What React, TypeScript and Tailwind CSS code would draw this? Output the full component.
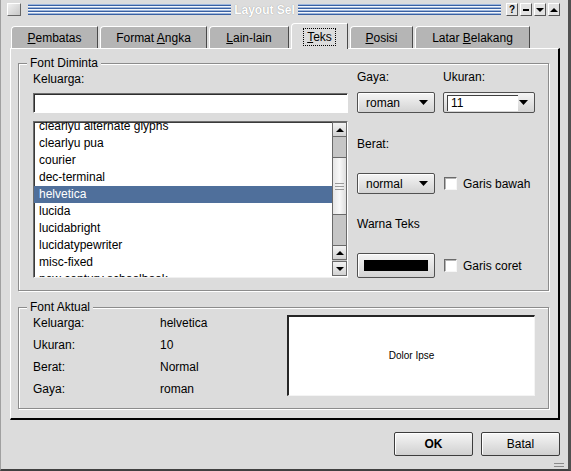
import React from 'react';

const families = [
  'clearlyu alternate glyphs',
  'clearlyu pua',
  'courier',
  'dec-terminal',
  'helvetica',
  'lucida',
  'lucidabright',
  'lucidatypewriter',
  'misc-fixed',
  'new century schoolbook',
];

const actual = [
  ['Keluarga:', 'helvetica'],
  ['Ukuran:', '10'],
  ['Berat:', 'Normal'],
  ['Gaya:', 'roman'],
];

function Arrow({ up = false, small = false, className = '' }: { up?: boolean; small?: boolean; className?: string }) {
  const w = small ? 8 : 9;
  const h = small ? 4 : 5;
  return (
    <svg width={w} height={h} viewBox={`0 0 ${w} ${h}`} className={className}>
      <polygon points={up ? `0,${h} ${w},${h} ${w / 2},0` : `0,0 ${w},0 ${w / 2},${h}`} fill="#000" />
    </svg>
  );
}

function Stripes() {
  return (
    <div className="flex h-[11px] flex-1 flex-col justify-between bg-[#f4f6fa]">
      {[0, 1, 2, 3].map((i) => (
        <div key={i} className="h-[2px] border-t border-[#9db6dc] bg-[#3a61a2]" />
      ))}
    </div>
  );
}

function TitleBtn({ children }: { children: React.ReactNode }) {
  return (
    <div className="flex h-[13px] w-[12px] items-center justify-center border border-t-white border-l-white border-r-[#555] border-b-[#555] bg-[#e2e2e2] text-[10px] font-bold leading-none">
      {children}
    </div>
  );
}

function Tab({ children, w }: { children: React.ReactNode; w: string }) {
  return (
    <div className={`flex h-[22px] items-center justify-center rounded-tl-[4px] border-t border-l border-t-white border-l-white border-r border-r-[#4a4a4a] bg-[#b5b5b5] ${w}`}>
      {children}
    </div>
  );
}

function Combo({ label, className = '' }: { label: string; className?: string }) {
  return (
    <div className={`flex h-[21px] items-center justify-between rounded-[2px] border border-[#515151] bg-linear-to-b from-[#f5f5f5] to-[#d3d3d3] pl-[8px] pr-[6px] shadow-[inset_1px_1px_0_#fff] ${className}`}>
      <span>{label}</span>
      <Arrow />
    </div>
  );
}

function Check() {
  return (
    <div className="h-[13px] w-[13px] shrink-0 border border-t-[#6a6a6a] border-l-[#6a6a6a] border-r-[#f6f6f6] border-b-[#f6f6f6] bg-white shadow-[inset_1px_1px_0_#b4b4b4]" />
  );
}

function ScrollBtn({ up = false }: { up?: boolean }) {
  return (
    <div className="flex h-[15px] shrink-0 items-center justify-center border border-[#6a6a6a] bg-linear-to-b from-[#f3f3f3] to-[#d2d2d2]">
      <Arrow up={up} small />
    </div>
  );
}

function Scrollbar() {
  return (
    <div className="flex w-[15px] flex-col">
      <ScrollBtn up />
      <div className="h-[20px] border-x border-[#6a6a6a] bg-[#c6c6c6]" />
      <div className="flex h-[58px] flex-col items-center justify-center gap-[2px] border border-[#6a6a6a] bg-linear-to-r from-[#e6e6e6] via-[#f8f8f8] to-[#dedede]">
        <div className="h-[1px] w-[9px] bg-[#9a9a9a]" />
        <div className="h-[1px] w-[9px] bg-[#9a9a9a]" />
        <div className="h-[1px] w-[9px] bg-[#9a9a9a]" />
      </div>
      <div className="h-[30px] border-x border-[#6a6a6a] bg-[#c6c6c6]" />
      <ScrollBtn up />
      <div className="h-[1px] bg-[#c6c6c6]" />
      <ScrollBtn />
    </div>
  );
}

function Group({ title, className, children }: { title: string; className: string; children: React.ReactNode }) {
  return (
    <div className={`relative border border-[#8c8c8c] shadow-[1px_1px_0_#fff,inset_1px_1px_0_#fff] ${className}`}>
      <span className="absolute -top-[8px] left-[8px] bg-[#dcdcdc] px-[3px] leading-[14px]">{title}</span>
      {children}
    </div>
  );
}

function PushButton({ children, bold = false }: { children: React.ReactNode; bold?: boolean }) {
  return (
    <div className={`flex h-[24px] w-[79px] items-center justify-center rounded-[2px] border border-[#3c3c3c] bg-linear-to-b from-[#f6f6f6] to-[#d0d0d0] shadow-[inset_1px_1px_0_#fff] ${bold ? 'font-bold' : ''}`}>
      {children}
    </div>
  );
}

export default function App() {
  return (
    <div className="relative flex h-[471px] w-[571px] flex-col overflow-hidden border-l border-r-[3px] border-b-2 border-l-[#a0a0a0] border-r-[#505050] border-b-[#404040] bg-[#dcdcdc] font-['Liberation_Sans',Arial,sans-serif] text-[12px] leading-[14px] text-black">
      {/* title bar */}
      <div className="flex h-[19px] items-center pl-[6px] pr-[8px]">
        <div className="h-[13px] w-[14px] border border-t-white border-l-white border-r-[#666] border-b-[#666] bg-linear-to-br from-[#f0f0f0] to-[#c8c8c8]" />
        <div className="ml-[7px] flex flex-1 items-center">
          <Stripes />
          <span className="px-[3px] font-bold text-white [text-shadow:0_0_1px_#8a8a8a]">Layout Sel</span>
          <Stripes />
        </div>
        <div className="ml-[5px] flex gap-[2px]">
          <TitleBtn>?</TitleBtn>
          <TitleBtn>
            <div className="h-[2px] w-[6px] bg-black" />
          </TitleBtn>
          <TitleBtn>
            <Arrow small />
          </TitleBtn>
          <TitleBtn>
            <Arrow small up />
          </TitleBtn>
        </div>
      </div>

      {/* tabs */}
      <div className="mt-[4px] flex h-[25px] items-end gap-[2px] pl-[10px]">
        <Tab w="w-[87px]">
          <span><span className="underline">P</span>embatas</span>
        </Tab>
        <Tab w="w-[107px]">
          <span>Format <span className="underline">A</span>ngka</span>
        </Tab>
        <Tab w="w-[80px]">
          <span><span className="underline">L</span>ain-lain</span>
        </Tab>
        <div className="relative z-10 -mb-px flex h-[26px] w-[57px] items-center justify-center rounded-tl-[4px] border-t border-l border-t-white border-l-white border-r border-r-[#4a4a4a] bg-[#dcdcdc]">
          <span className="border border-dotted border-black px-[3px] py-[1px]">
            <span className="underline">T</span>eks
          </span>
        </div>
        <Tab w="w-[63px]">
          <span><span className="underline">P</span>osisi</span>
        </Tab>
        <Tab w="w-[115px]">
          <span>Latar <span className="underline">B</span>elakang</span>
        </Tab>
      </div>

      {/* panel */}
      <div className="ml-[9px] flex h-[372px] w-[550px] flex-col border-t border-l border-r-2 border-b-2 border-t-white border-l-white border-r-black border-b-black pl-[7px]">
        <Group title="Font Diminta" className="mt-[14px] h-[228px] w-[531px]">
          <div className="flex pl-[14px]">
            <div className="flex w-[315px] flex-col pt-[8px]">
              <span>Keluarga:</span>
              <div className="mt-[7px] h-[20px] border border-t-[#6e6e6e] border-l-[#6e6e6e] border-r-white border-b-white bg-white shadow-[inset_1px_1px_0_#2e2e2e]" />
              <div className="mt-[8px] flex h-[157px] border border-t-[#6e6e6e] border-l-[#6e6e6e] border-r-white border-b-[#f0f0f0] bg-white shadow-[inset_1px_1px_0_#3a3a3a]">
                <div className="flex-1 overflow-hidden pt-[1px]">
                  <div className="-mt-[5px]">
                    {families.map((f) => (
                      <div
                        key={f}
                        className={`h-[17px] pl-[5px] leading-[17px] ${f === 'helvetica' ? 'bg-[#4f6f9b] text-white' : ''}`}
                      >
                        {f}
                      </div>
                    ))}
                  </div>
                </div>
                <Scrollbar />
              </div>
            </div>

            <div className="ml-[9px] flex flex-col pt-[6px]">
              <div className="flex gap-[8px]">
                <span className="w-[78px]">Gaya:</span>
                <span>Ukuran:</span>
              </div>
              <div className="mt-[8px] flex gap-[8px]">
                <Combo label="roman" className="w-[78px]" />
                <div className="flex h-[21px] w-[92px] items-center rounded-[2px] border border-[#515151] bg-linear-to-b from-[#f5f5f5] to-[#d3d3d3] pl-[3px] pr-[6px]">
                  <div className="flex h-[16px] w-[71px] items-center border-t border-l border-t-[#404040] border-l-[#404040] bg-white pl-[3px]">11</div>
                  <Arrow className="ml-auto" />
                </div>
              </div>
              <span className="mt-[24px]">Berat:</span>
              <div className="mt-[22px] flex items-center">
                <Combo label="normal" className="w-[78px]" />
                <div className="ml-[9px]"><Check /></div>
                <span className="ml-[6px]">Garis bawah</span>
              </div>
              <span className="mt-[23px]">Warna Teks</span>
              <div className="mt-[22px] flex items-center">
                <div className="flex h-[25px] w-[78px] items-center justify-center rounded-[2px] border border-[#515151] bg-linear-to-b from-[#f5f5f5] to-[#d3d3d3] shadow-[inset_1px_1px_0_#fff]">
                  <div className="h-[11px] w-[64px] bg-black" />
                </div>
                <div className="ml-[9px]"><Check /></div>
                <span className="ml-[6px]">Garis coret</span>
              </div>
            </div>
          </div>
        </Group>

        <Group title="Font Aktual" className="mt-[16px] h-[102px] w-[531px]">
          <div className="flex items-start">
            <div className="grid grid-cols-[127px_100px] pl-[14px] pt-[4px]">
              {actual.map(([k, v]) => (
                <React.Fragment key={k}>
                  <span className="leading-[22px]">{k}</span>
                  <span className="leading-[22px]">{v}</span>
                </React.Fragment>
              ))}
            </div>
            <div className="ml-auto mr-[13px] mt-[7px] flex h-[81px] w-[248px] items-center justify-center border-t-2 border-l-2 border-r border-b border-t-[#262626] border-l-[#262626] border-r-[#f4f4f4] border-b-[#f4f4f4] bg-white text-[10px]">
              Dolor Ipse
            </div>
          </div>
        </Group>
      </div>

      {/* buttons */}
      <div className="mt-[12px] flex justify-end gap-[8px] pr-[8px]">
        <PushButton bold>OK</PushButton>
        <PushButton>Batal</PushButton>
      </div>

      <div className="absolute bottom-[2px] right-[4px] flex flex-col gap-[2px]">
        <div className="h-[1px] w-[10px] bg-[#8a8a8a]" />
        <div className="h-[1px] w-[10px] bg-[#8a8a8a]" />
      </div>
    </div>
  );
}
